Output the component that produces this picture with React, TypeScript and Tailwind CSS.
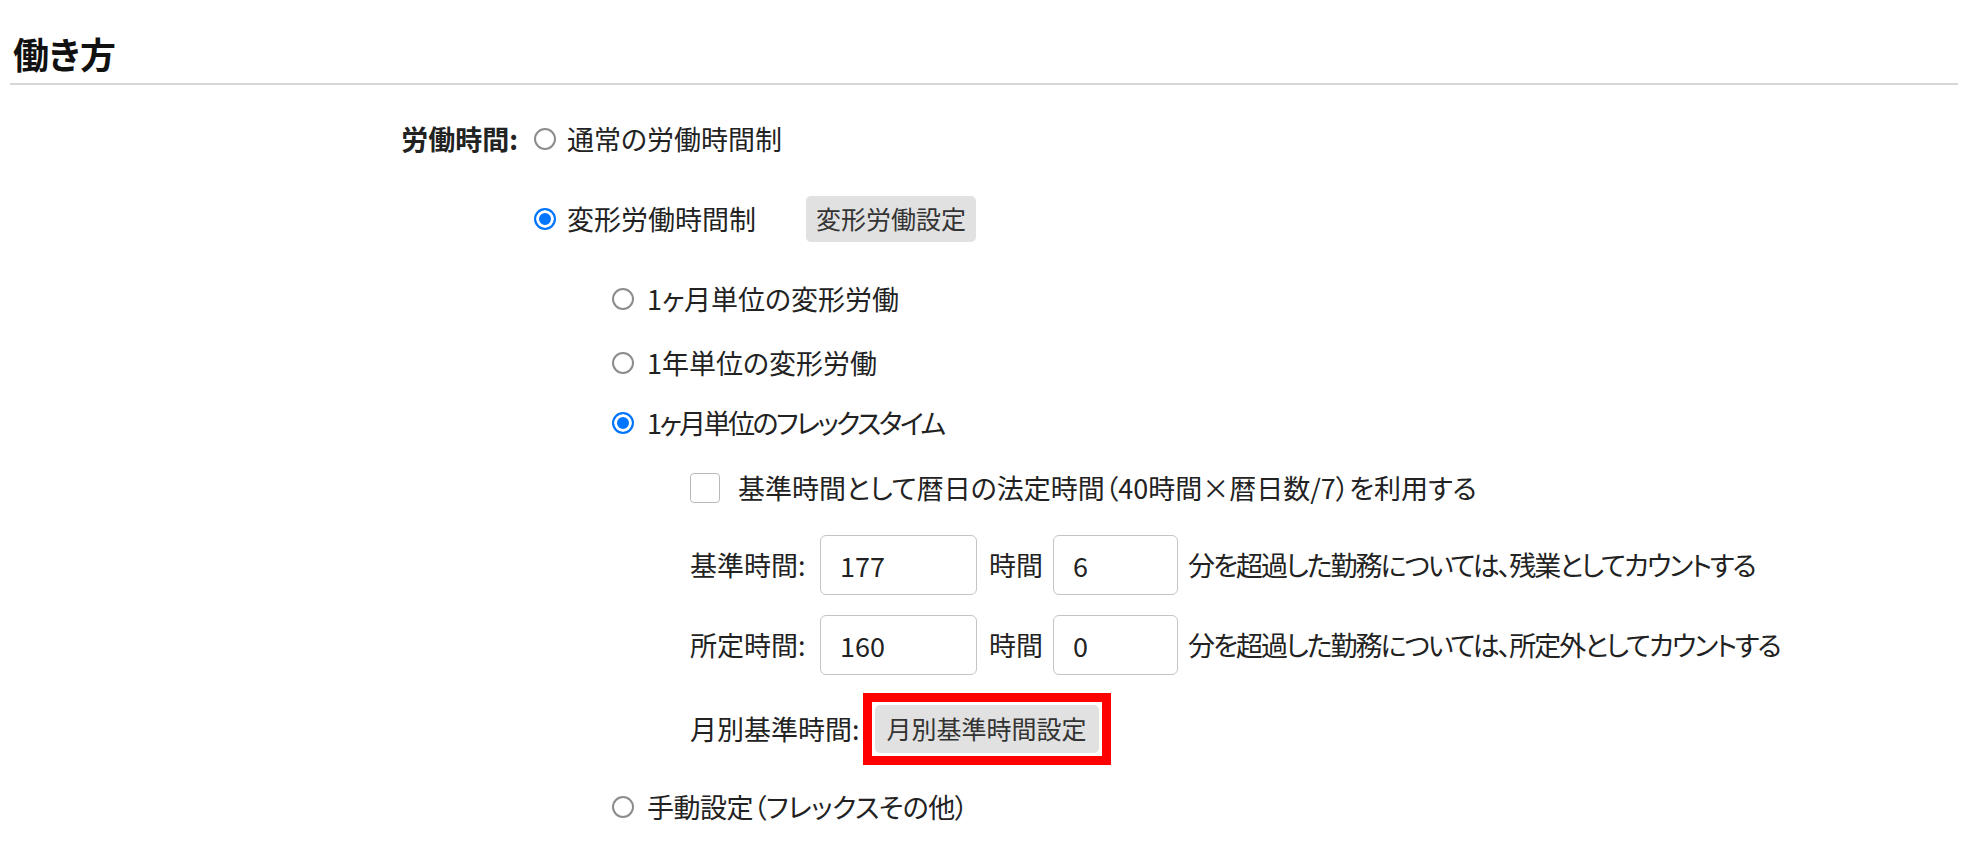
import { useState } from 'react';

type RadioProps = {
    checked: boolean;
    onChange: () => void;
};

// ブラウザ標準風のラジオボタン
const Radio = ({ checked, onChange }: RadioProps) => (
    <input
        type="radio"
        checked={checked}
        onChange={onChange}
        className="appearance-none shrink-0 w-[22px] h-[22px] rounded-full border-2 border-[#8c8c8c] bg-white checked:border-[#0075ff] checked:bg-[#0075ff] checked:shadow-[inset_0_0_0_3px_#fff]"
    />
);

const NumberBox = ({ value, width }: { value: string; width: string }) => (
    <input
        type="text"
        defaultValue={value}
        className={`${width} h-[60px] rounded-[6px] border border-[#c4c4c4] px-[19px] text-[27px] text-[#222] outline-none`}
    />
);

const App = () => {
    const [mode, setMode] = useState<'normal' | 'variable'>('variable');
    const [sub, setSub] = useState<'month' | 'year' | 'flex' | 'manual'>('flex');
    const [useLegal, setUseLegal] = useState(false);

    return (
        <div className="min-h-screen bg-white text-[#222] font-['Noto_Sans_CJK_JP','Noto_Sans',sans-serif] [font-feature-settings:'palt']">
            <div className="px-[10px] pt-[33px]">
                <h2 className="pl-[3px] text-[36px] font-bold leading-[41px] text-[#111]">働き方</h2>
                <div className="mt-[9px] h-[2px] bg-[#d6d6d6]" />
            </div>

            <div className="mt-[31px] flex text-[27px]">
                <div className="w-[518px] h-[46px] flex items-center justify-end font-bold">労働時間:</div>

                <div className="ml-[16px]">
                    <label className="flex items-center h-[46px]">
                        <Radio checked={mode === 'normal'} onChange={() => setMode('normal')} />
                        <span className="ml-[11px]">通常の労働時間制</span>
                    </label>

                    <div className="mt-[34px] flex items-center h-[46px]">
                        <label className="flex items-center">
                            <Radio checked={mode === 'variable'} onChange={() => setMode('variable')} />
                            <span className="ml-[11px]">変形労働時間制</span>
                        </label>
                        <button className="ml-[50px] h-[46px] px-[10px] rounded-[5px] bg-[#e1e1e1] text-[25px] text-[#333]">
                            変形労働設定
                        </button>
                    </div>

                    <div className="pl-[78px]">
                        <label className="mt-[34px] flex items-center h-[46px]">
                            <Radio checked={sub === 'month'} onChange={() => setSub('month')} />
                            <span className="ml-[13px]">1ヶ月単位の変形労働</span>
                        </label>
                        <label className="mt-[18px] flex items-center h-[46px]">
                            <Radio checked={sub === 'year'} onChange={() => setSub('year')} />
                            <span className="ml-[13px]">1年単位の変形労働</span>
                        </label>
                        <label className="mt-[14px] flex items-center h-[46px]">
                            <Radio checked={sub === 'flex'} onChange={() => setSub('flex')} />
                            <span className="ml-[13px] tracking-[-2.5px]">1ヶ月単位のフレックスタイム</span>
                        </label>

                        <div className="pl-[78px]">
                            <label className="mt-[19px] flex items-center h-[46px]">
                                <input
                                    type="checkbox"
                                    checked={useLegal}
                                    onChange={() => setUseLegal(!useLegal)}
                                    className="appearance-none shrink-0 w-[30px] h-[30px] rounded-[4px] border border-[#b8b8b8] bg-white checked:bg-[#0075ff] checked:border-[#0075ff]"
                                />
                                <span className="ml-[18px]">基準時間として暦日の法定時間（40時間×暦日数/7）を利用する</span>
                            </label>

                            <div className="mt-[24px] flex items-center h-[60px]">
                                <span className="w-[130px]">基準時間:</span>
                                <NumberBox value="177" width="w-[157px]" />
                                <span className="ml-[12px]">時間</span>
                                <span className="ml-[10px]"><NumberBox value="6" width="w-[125px]" /></span>
                                <span className="ml-[10px] tracking-[-2px]">分を超過した勤務については、残業としてカウントする</span>
                            </div>

                            <div className="mt-[20px] flex items-center h-[60px]">
                                <span className="w-[130px]">所定時間:</span>
                                <NumberBox value="160" width="w-[157px]" />
                                <span className="ml-[12px]">時間</span>
                                <span className="ml-[10px]"><NumberBox value="0" width="w-[125px]" /></span>
                                <span className="ml-[10px] tracking-[-2px]">分を超過した勤務については、所定外としてカウントする</span>
                            </div>

                            <div className="mt-[18px] flex items-center h-[72px]">
                                <span className="pr-[3px]">月別基準時間:</span>
                                <div className="border-[9px] border-[#ff0000] p-[3px]">
                                    <button className="h-[48px] px-[12px] rounded-[5px] bg-[#e1e1e1] text-[25px] text-[#333]">
                                        月別基準時間設定
                                    </button>
                                </div>
                            </div>
                        </div>

                        <label className="mt-[19px] flex items-center h-[46px]">
                            <Radio checked={sub === 'manual'} onChange={() => setSub('manual')} />
                            <span className="ml-[13px] tracking-[-0.5px]">手動設定（フレックスその他）</span>
                        </label>
                    </div>
                </div>
            </div>
        </div>
    );
};

export default App;
